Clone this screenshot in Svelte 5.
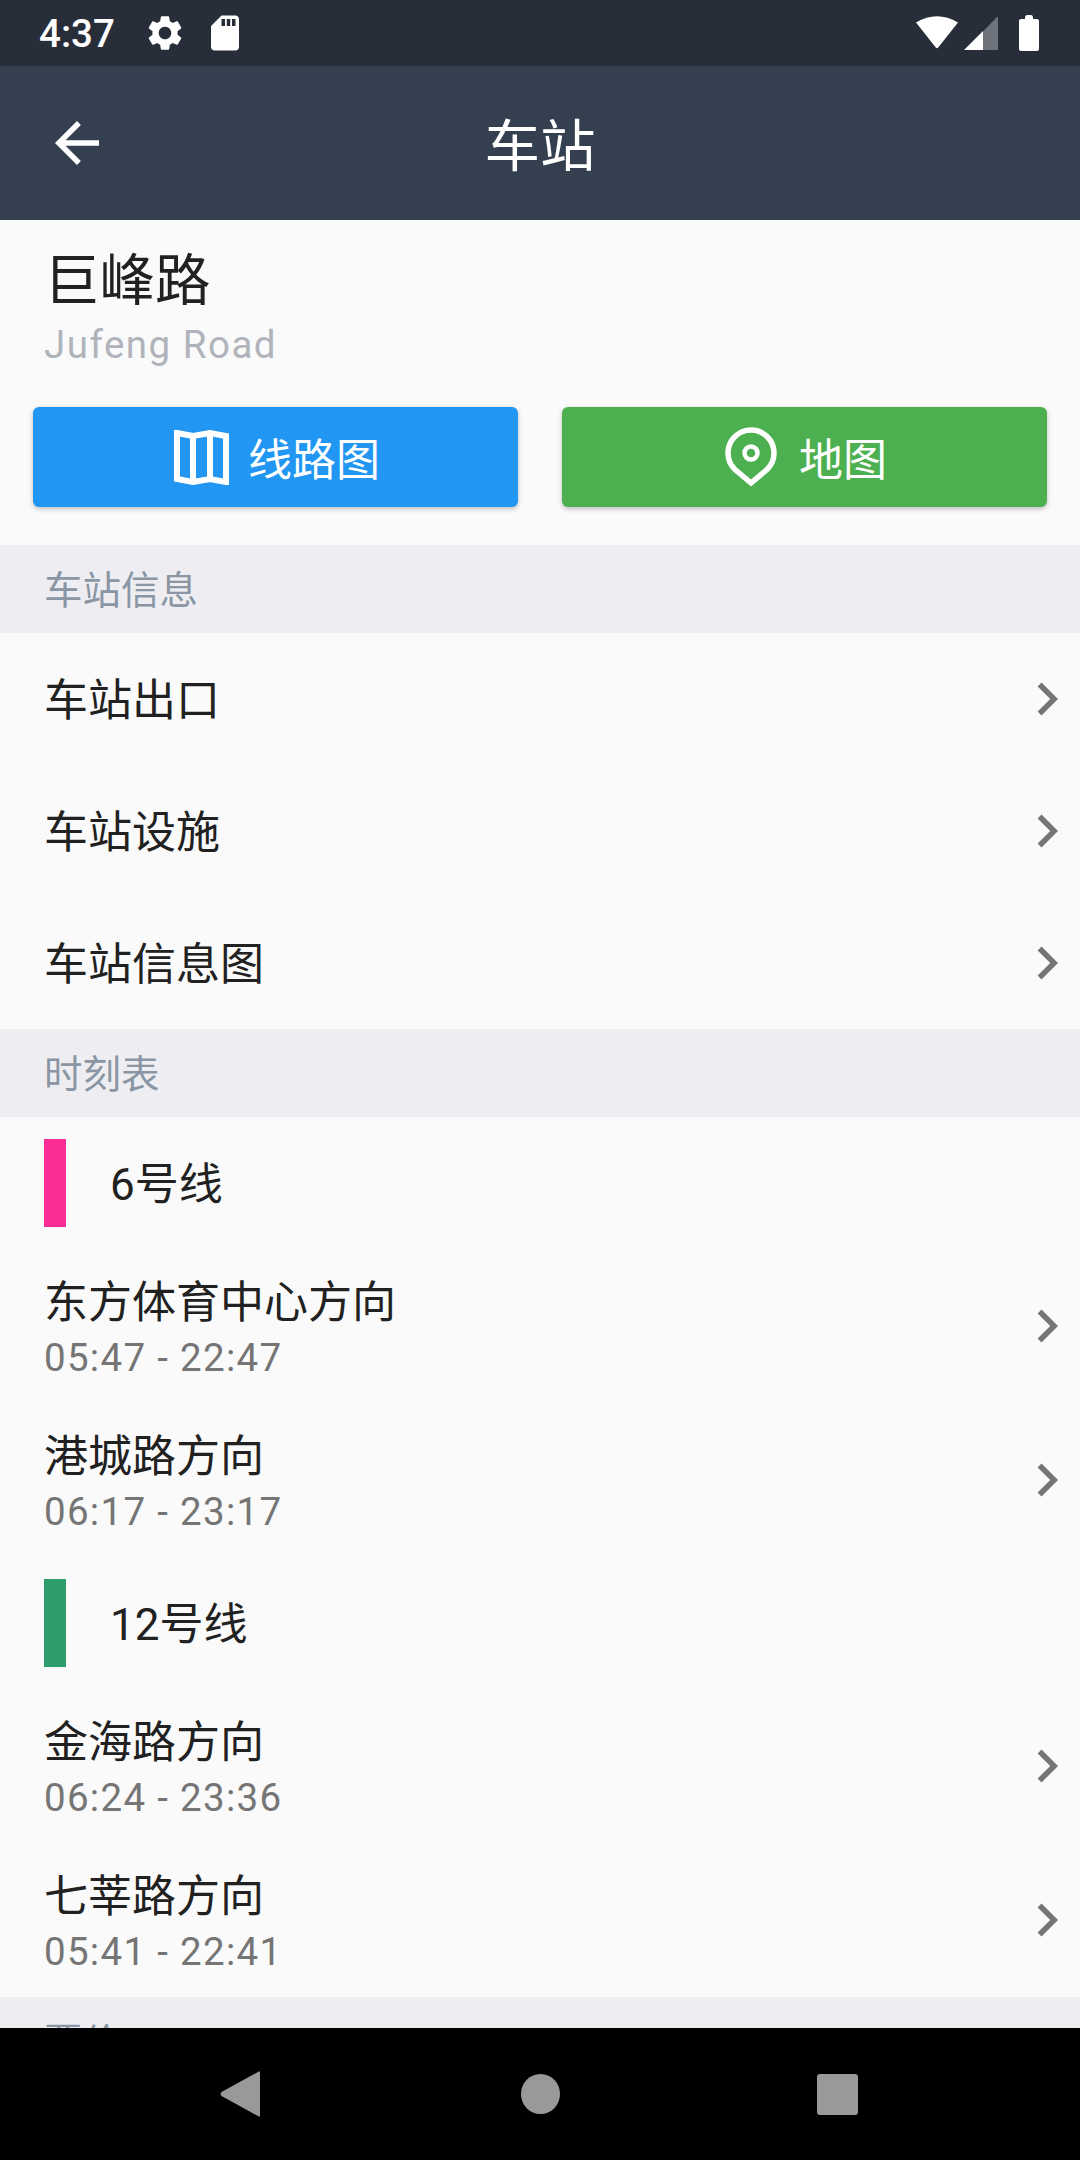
<script lang="ts">
	const infoRows = ['车站出口', '车站设施', '车站信息图'];
	const lines = [
		{
			name: '6号线',
			color: '#fb2e98',
			directions: [
				{ to: '东方体育中心方向', hours: '05:47 - 22:47' },
				{ to: '港城路方向', hours: '06:17 - 23:17' }
			]
		},
		{
			name: '12号线',
			color: '#2f9d6b',
			directions: [
				{ to: '金海路方向', hours: '06:24 - 23:36' },
				{ to: '七莘路方向', hours: '05:41 - 22:41' }
			]
		}
	];
</script>

{#snippet chevron()}
	<svg class="chevron" viewBox="0 0 24 24" aria-hidden="true">
		<path d="M10 6L8.59 7.41 13.17 12l-4.58 4.59L10 18l6-6z" />
	</svg>
{/snippet}

<div class="phone">
	<div class="status-bar">
		<div class="status-left">
			<span class="clock">4:37</span>
			<svg class="status-icon gear" viewBox="0 0 24 24" aria-hidden="true">
				<path d="M19.14 12.94c.04-.3.06-.61.06-.94 0-.32-.02-.64-.07-.94l2.03-1.58c.18-.14.23-.41.12-.61l-1.92-3.32c-.12-.22-.37-.29-.59-.22l-2.39.96c-.5-.38-1.03-.7-1.62-.94l-.36-2.54c-.04-.24-.24-.41-.48-.41h-3.84c-.24 0-.43.17-.47.41l-.36 2.54c-.59.24-1.13.57-1.62.94l-2.39-.96c-.22-.08-.47 0-.59.22L2.74 8.87c-.12.21-.08.47.12.61l2.03 1.58c-.05.3-.09.63-.09.94s.02.64.07.94l-2.03 1.58c-.18.14-.23.41-.12.61l1.92 3.32c.12.22.37.29.59.22l2.39-.96c.5.38 1.03.7 1.62.94l.36 2.54c.05.24.24.41.48.41h3.84c.24 0 .44-.17.47-.41l.36-2.54c.59-.24 1.13-.56 1.62-.94l2.39.96c.22.08.47 0 .59-.22l1.92-3.32c.12-.22.07-.47-.12-.61l-2.01-1.58zM12 15.6c-1.98 0-3.6-1.62-3.6-3.6s1.62-3.6 3.6-3.6 3.6 1.62 3.6 3.6-1.62 3.6-3.6 3.6z" />
			</svg>
			<svg class="status-icon sd" viewBox="0 0 24 24" aria-hidden="true">
				<path d="M18 2h-8L4.02 8 4 20c0 1.1.9 2 2 2h12c1.1 0 2-.9 2-2V4c0-1.1-.9-2-2-2zm-6 6h-2V4h2v4zm3 0h-2V4h2v4zm3 0h-2V4h2v4z" />
			</svg>
		</div>
		<div class="status-right">
			<svg class="wifi" viewBox="0 0 42 34" aria-hidden="true">
				<path d="M0 6.5 Q21 -6 42 6.5 L22.2 31.5 Q21 33 19.8 31.5 Z" />
			</svg>
			<svg class="signal" viewBox="0 0 34 34" aria-hidden="true">
				<path d="M19 15.5 L33 1 Q34 0 34 2 V33 Q34 34 33 34 H19 Z" fill="#6f747c" />
				<path d="M0 34 L19 15 V34 H1 Q-.5 34 0 34 Z" />
			</svg>
			<svg class="battery" viewBox="0 0 20 36" aria-hidden="true">
				<path d="M6 2.5 Q6 0 8 0 H12 Q14 0 14 2.5 V4 H18 Q20 4 20 6 V34 Q20 36 18 36 H2 Q0 36 0 34 V6 Q0 4 2 4 H6 Z" />
			</svg>
		</div>
	</div>

	<header class="app-bar">
		<svg class="back" viewBox="0 0 24 24" aria-hidden="true">
			<path d="M20 11H7.83l5.59-5.59L12 4l-8 8 8 8 1.41-1.41L7.83 13H20v-2z" />
		</svg>
		<h1>车站</h1>
		<span></span>
	</header>

	<main class="content">
		<div class="station">
			<div class="station-name">巨峰路</div>
			<div class="station-en">Jufeng Road</div>
		</div>

		<div class="actions">
			<button class="action blue">
				<svg class="map-icon" viewBox="0 0 55 55" aria-hidden="true">
					<path d="M3 3 L19 6 L36 3 L52 6 V52 L36 49 L19 52 L3 49 Z M19 6 V52 M36 3 V49" />
				</svg>
				线路图
			</button>
			<button class="action green">
				<svg class="pin-icon" viewBox="0 0 52 60" aria-hidden="true">
					<path d="M26 56 L9.7 42.3 A23 23 0 1 1 42.3 42.3 Z" />
					<circle class="pin-ring" cx="26" cy="26" r="6.5" />
				</svg>
				地图
			</button>
		</div>

		<div class="section">车站信息</div>
		{#each infoRows as row}
			<div class="row">
				<span class="label">{row}</span>
				{@render chevron()}
			</div>
		{/each}

		<div class="section">时刻表</div>
		{#each lines as line}
			<div class="line">
				<span class="line-mark" style="background: {line.color}"></span>
				<span class="label">{line.name}</span>
			</div>
			{#each line.directions as dir}
				<div class="row tall">
					<div class="dir">
						<div class="dir-name">{dir.to}</div>
						<div class="dir-hours">{dir.hours}</div>
					</div>
					{@render chevron()}
				</div>
			{/each}
		{/each}

		<div class="section">票价</div>
	</main>

	<nav class="nav-bar">
		<svg class="nav-back" viewBox="0 0 40 46" aria-hidden="true">
			<path d="M38 1 Q40 -1 40 2 V44 Q40 47 38 45 L1.5 25 Q-.5 23 1.5 21 Z" />
		</svg>
		<span class="nav-home"></span>
		<span class="nav-recent"></span>
	</nav>
</div>

<style>
	:global(body) {
		background: #fafafa;
	}

	.phone {
		display: flex;
		flex-direction: column;
		width: 1080px;
		height: 2160px;
		overflow: hidden;
		font-family: Roboto, 'Noto Sans CJK SC', sans-serif;
		color: #212121;
		background: #fafafa;
	}

	.status-bar {
		display: flex;
		justify-content: space-between;
		align-items: center;
		flex: none;
		height: 66px;
		background: #272d39;
		color: #fff;
	}

	.status-left {
		display: flex;
		align-items: center;
		padding-left: 39px;
	}

	.clock {
		font-size: 38.5px;
		font-weight: 500;
		width: 105px;
	}

	.status-icon {
		width: 42px;
		height: 42px;
		fill: #fff;
	}

	.gear {
		margin-right: 18px;
	}

	.status-right {
		display: flex;
		align-items: center;
		padding-right: 41px;
	}

	.status-right svg {
		fill: #fff;
	}

	.wifi {
		width: 42px;
		height: 34px;
		margin-right: 6px;
	}

	.signal {
		width: 34px;
		height: 34px;
		margin-right: 21px;
	}

	.battery {
		width: 20px;
		height: 36px;
	}

	.app-bar {
		display: grid;
		grid-template-columns: 1fr auto 1fr;
		align-items: center;
		flex: none;
		height: 154px;
		background: #344050;
		color: #fff;
	}

	.back {
		width: 66px;
		height: 66px;
		margin-left: 44px;
		fill: #fff;
	}

	h1 {
		margin: 0;
		padding-bottom: 2px;
		font-size: 55.5px;
		font-weight: 400;
	}

	.content {
		flex: 1;
		min-height: 0;
		overflow: hidden;
	}

	.station {
		height: 187px;
		padding: 23px 0 0 44px;
		box-sizing: border-box;
	}

	.station-name {
		font-size: 55.5px;
		line-height: 78px;
	}

	.station-en {
		font-size: 38.5px;
		line-height: 48px;
		letter-spacing: 1.5px;
		color: #b0b4ba;
	}

	.actions {
		display: flex;
		gap: 44px;
		height: 138px;
		padding: 0 33px;
		box-sizing: border-box;
	}

	.action {
		display: flex;
		justify-content: center;
		align-items: center;
		gap: 22px;
		flex: 1;
		height: 100px;
		padding: 0;
		border: none;
		border-radius: 6px;
		font: inherit;
		font-size: 44px;
		color: #fff;
		box-shadow: 0 2px 5px rgba(0, 0, 0, 0.24);
	}

	.blue {
		background: #2196f3;
	}

	.green {
		background: #4caf50;
	}

	.map-icon {
		width: 55px;
		height: 55px;
		margin: 0 -3px 0 3px;
		fill: none;
		stroke: #fff;
		stroke-width: 6;
	}

	.pin-icon {
		width: 52px;
		height: 60px;
		margin-left: 3px;
		fill: none;
		stroke: #fff;
		stroke-width: 5.5;
	}

	.pin-ring {
		stroke-width: 4.5;
	}

	.section {
		height: 88px;
		padding-top: 3px;
		padding-left: 44px;
		box-sizing: border-box;
		font-size: 38.5px;
		line-height: 85px;
		color: #8a96a3;
		background: #eeeef2;
	}

	.row {
		display: flex;
		justify-content: space-between;
		align-items: center;
		height: 132px;
		padding-left: 44px;
		font-size: 44px;
	}

	.row.tall {
		height: 154px;
	}

	.label {
		padding-bottom: 4px;
	}

	.chevron {
		flex: none;
		width: 66px;
		height: 66px;
		fill: #757575;
	}

	.dir {
		padding-top: 3px;
	}

	.dir-name {
		line-height: 56px;
	}

	.dir-hours {
		margin-top: 5px;
		font-size: 38.5px;
		line-height: 44px;
		letter-spacing: 1.3px;
		color: #757575;
	}

	.line {
		display: flex;
		align-items: center;
		gap: 44px;
		height: 132px;
		padding-left: 44px;
		font-size: 44px;
	}

	.line-mark {
		width: 22px;
		height: 88px;
	}

	.nav-bar {
		display: flex;
		align-items: center;
		flex: none;
		height: 132px;
		padding-left: 220px;
		background: #000;
	}

	.nav-back {
		width: 40px;
		height: 46px;
		margin-right: 261px;
		fill: #999;
	}

	.nav-home {
		width: 39px;
		height: 40px;
		margin-right: 257px;
		border-radius: 50%;
		background: #999;
	}

	.nav-recent {
		width: 41px;
		height: 41px;
		border-radius: 3px;
		background: #999;
	}
</style>
